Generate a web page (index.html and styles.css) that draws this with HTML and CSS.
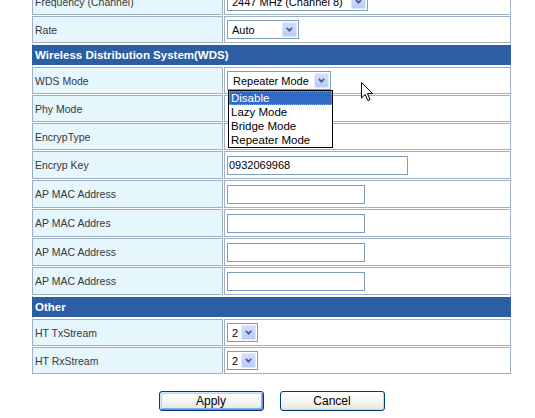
FILE: index.html
```html
<!DOCTYPE html>
<html>
<head>
<meta charset="utf-8">
<link rel="stylesheet" href="styles.css">
</head>
<body>
<div class="page">
  <table class="cfg">
    <tr>
      <td class="head">Frequency (Channel)</td>
      <td class="val"><span class="sel sel-freq"><span class="sel-text">2447 MHz (Channel 8)</span><span class="sel-btn"><svg width="7" height="5" viewBox="0 0 7 5"><path d="M0.8 0.8 L3.5 3.6 L6.2 0.8" fill="none" stroke="#4d6185" stroke-width="1.8"/></svg></span></span></td>
    </tr>
    <tr>
      <td class="head">Rate</td>
      <td class="val"><span class="sel sel-rate"><span class="sel-text">Auto</span><span class="sel-btn"><svg width="7" height="5" viewBox="0 0 7 5"><path d="M0.8 0.8 L3.5 3.6 L6.2 0.8" fill="none" stroke="#4d6185" stroke-width="1.8"/></svg></span></span></td>
    </tr>
    <tr>
      <td class="title" colspan="2">Wireless Distribution System(WDS)</td>
    </tr>
    <tr>
      <td class="head">WDS Mode</td>
      <td class="val">
        <span class="sel sel-wds"><span class="sel-text">Repeater Mode</span><span class="sel-btn"><svg width="7" height="5" viewBox="0 0 7 5"><path d="M0.8 0.8 L3.5 3.6 L6.2 0.8" fill="none" stroke="#4d6185" stroke-width="1.8"/></svg></span>
          <span class="dd">
            <span class="opt on">Disable</span>
            <span class="opt">Lazy Mode</span>
            <span class="opt">Bridge Mode</span>
            <span class="opt">Repeater Mode</span>
          </span>
        </span>
      </td>
    </tr>
    <tr>
      <td class="head">Phy Mode</td>
      <td class="val"></td>
    </tr>
    <tr>
      <td class="head">EncrypType</td>
      <td class="val"></td>
    </tr>
    <tr class="in-row">
      <td class="head">Encryp Key</td>
      <td class="val"><span class="txt txt-key">0932069968</span></td>
    </tr>
    <tr class="in-row">
      <td class="head">AP MAC Address</td>
      <td class="val"><span class="txt txt-mac"></span></td>
    </tr>
    <tr class="in-row">
      <td class="head">AP MAC Addres</td>
      <td class="val"><span class="txt txt-mac"></span></td>
    </tr>
    <tr class="in-row">
      <td class="head">AP MAC Address</td>
      <td class="val"><span class="txt txt-mac"></span></td>
    </tr>
    <tr class="in-row">
      <td class="head">AP MAC Address</td>
      <td class="val"><span class="txt txt-mac"></span></td>
    </tr>
    <tr>
      <td class="title" colspan="2">Other</td>
    </tr>
    <tr>
      <td class="head">HT TxStream</td>
      <td class="val"><span class="sel sel-ht"><span class="sel-text">2</span><span class="sel-btn"><svg width="7" height="5" viewBox="0 0 7 5"><path d="M0.8 0.8 L3.5 3.6 L6.2 0.8" fill="none" stroke="#4d6185" stroke-width="1.8"/></svg></span></span></td>
    </tr>
    <tr>
      <td class="head">HT RxStream</td>
      <td class="val"><span class="sel sel-ht"><span class="sel-text">2</span><span class="sel-btn"><svg width="7" height="5" viewBox="0 0 7 5"><path d="M0.8 0.8 L3.5 3.6 L6.2 0.8" fill="none" stroke="#4d6185" stroke-width="1.8"/></svg></span></span></td>
    </tr>
  </table>
  <div class="actions">
    <button class="btn btn-default" type="button">Apply</button>
    <button class="btn" type="button">Cancel</button>
  </div>
  <svg class="cursor" width="13" height="20" viewBox="0 0 13 20"><path d="M0.5 0.5 L0.5 16 L4.2 12.4 L6.8 18.6 L9 17.7 L6.5 11.6 L11.6 11.6 Z" fill="#fff" stroke="#000" stroke-width="1" stroke-linejoin="miter"/></svg>
</div>
</body>
</html>
```

FILE: styles.css
```css
html {
  overflow: hidden;
}

body {
  margin: 0;
  padding: 0;
  background: #ffffff;
}

.page {
  position: relative;
  width: 535px;
  padding-top: 1px;
  font-family: "Liberation Sans", Arial, sans-serif;
}

.cfg {
  margin: -14px 0 0 31px;
  width: 481px;
  border-collapse: separate;
  border-spacing: 1px;
  table-layout: fixed;
}

.cfg td {
  box-sizing: border-box;
  height: 27px;
  padding: 0 2px;
  border: 1px solid #9fafc5;
  vertical-align: middle;
  font-size: 10.5px;
  color: #383838;
  line-height: 12px;
}

.cfg td.head {
  width: 191px;
  background: #e6f6fd;
}

.cfg td.val {
  width: 287px;
  background: #ffffff;
}

.cfg tr.in-row td {
  height: 28px;
}

.cfg td.title {
  height: 22px;
  background: #2c5ea4;
  border-top: 1px solid #ffffff;
  border-bottom: 1px solid #ffffff;
  border-left: 1px solid #2c5ea4;
  border-right: 1px solid #2c5ea4;
  color: #ffffff;
  font-weight: bold;
  font-size: 11.5px;
}

.sel {
  position: relative;
  display: inline-flex;
  align-items: center;
  box-sizing: border-box;
  height: 19px;
  border: 1px solid #7f9db9;
  background: #ffffff;
  vertical-align: middle;
  font-size: 11px;
  color: #000000;
  padding-left: 4px;
}

.sel-text {
  flex: 1;
  white-space: nowrap;
  overflow: hidden;
}

.sel-btn {
  display: flex;
  align-items: center;
  justify-content: center;
  box-sizing: border-box;
  width: 15px;
  height: 15px;
  margin: 0 1px 0 2px;
  border: 1px solid #dfe7fd;
  border-radius: 1px;
  background: linear-gradient(#d3defd, #b8cbfa);
}

.sel-freq { width: 141px; }
.sel-rate { width: 72px; }
.sel-wds { width: 104px; padding-left: 5px; }
.sel-ht { width: 31px; }

.dd {
  position: absolute;
  left: 0;
  top: 18px;
  box-sizing: border-box;
  width: 105px;
  border: 1px solid #000000;
  background: #ffffff;
  display: flex;
  flex-direction: column;
  z-index: 5;
}

.opt {
  display: block;
  height: 14px;
  line-height: 14px;
  padding-left: 2px;
  font-size: 11.5px;
  color: #000000;
  white-space: nowrap;
}

.opt.on {
  background: #316ac5;
  color: #ffffff;
  outline: 1px dotted #e2a11c;
  outline-offset: -1px;
}

.txt {
  display: inline-block;
  box-sizing: border-box;
  height: 19px;
  border: 1px solid #7f9db9;
  background: #ffffff;
  vertical-align: middle;
  font-size: 11px;
  line-height: 17px;
  color: #000000;
  padding-left: 1px;
}

.txt-key { width: 181px; }
.txt-mac { width: 138px; }

.actions {
  margin: 16px 0 0 31px;
  width: 481px;
  display: flex;
  justify-content: center;
  gap: 16px;
}

.btn {
  box-sizing: border-box;
  width: 105px;
  height: 20px;
  padding: 0;
  border: 1px solid #003c74;
  border-radius: 3px;
  background: linear-gradient(#ffffff, #f4f4f0 60%, #e6e3da);
  box-shadow: inset -1px -1px 0 #d6d0c5;
  font-family: "Liberation Sans", Arial, sans-serif;
  font-size: 12px;
  color: #000000;
  line-height: 17px;
}

.btn-default {
  box-shadow: inset 1px 1px 0 #cee7ff, inset -1px -1px 0 #6982ee, inset 2px 2px 0 #bcd4f6, inset -2px -2px 0 #89adf5;
}

.cursor {
  position: absolute;
  left: 361px;
  top: 82px;
}
```
